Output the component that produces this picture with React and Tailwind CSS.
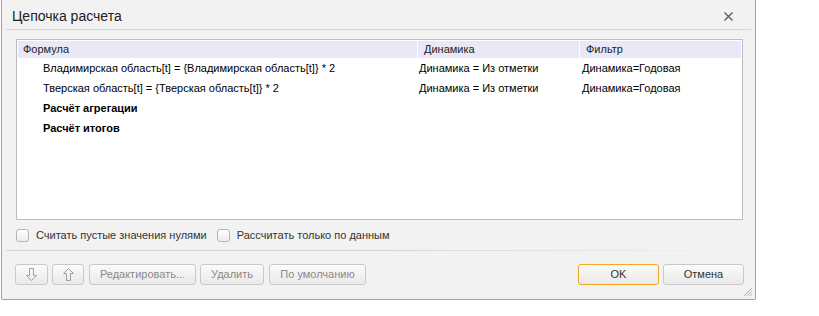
import React from 'react'

const font = { fontFamily: '"Liberation Sans", Arial, sans-serif' }

const rows = [
  { formula: 'Владимирская область[t] = {Владимирская область[t]} * 2', dyn: 'Динамика = Из отметки', filter: 'Динамика=Годовая' },
  { formula: 'Тверская область[t] = {Тверская область[t]} * 2', dyn: 'Динамика = Из отметки', filter: 'Динамика=Годовая' },
  { formula: 'Расчёт агрегации', bold: true },
  { formula: 'Расчёт итогов', bold: true },
]

const Btn = ({ children, w, disabled, primary }) => (
  <button
    type="button"
    className={`${w} h-[21px] flex items-center justify-center rounded-[3px] border bg-gradient-to-b from-[#fbfbfb] to-[#e9e9e9] text-[11px] ${
      primary ? 'border-[#f5a623]' : 'border-[#c9c9c9]'
    } ${disabled ? 'text-[#8a8a8a]' : 'text-[#333]'}`}
  >
    {children}
  </button>
)

const Arrow = ({ up }) => (
  <svg width="11" height="13" viewBox="0 0 11 13" className={up ? 'rotate-180' : ''}>
    <path d="M3.5 0.5 H7.5 V7.5 H10.5 L5.5 12.5 L0.5 7.5 H3.5 Z" fill="none" stroke="#a0a0a0" strokeWidth="1" />
  </svg>
)

const Check = ({ label }) => (
  <label className="flex items-center gap-[7px]">
    <span className="w-[13px] h-[13px] rounded-[3px] border border-[#b5b5b5] bg-gradient-to-b from-white to-[#ececec]" />
    <span className="text-[11px] text-[#333]">{label}</span>
  </label>
)

export default function App() {
  return (
    <div className="w-[819px] h-[316px] bg-white pl-px" style={font}>
      <div className="relative w-[755px] h-[300px] bg-[#f2f2f2] border-x border-b border-[#a3a3a3] rounded-b-[2px] flex flex-col">
        <div className="h-[29px] flex items-center justify-between pl-[10px] pr-[22px] pt-[3px]">
          <span className="text-[14px] text-[#222]">Цепочка расчета</span>
          <svg width="9" height="9" viewBox="0 0 9 9">
            <path d="M0.5 0.5 L8.5 8.5 M8.5 0.5 L0.5 8.5" stroke="#555" strokeWidth="1.2" />
          </svg>
        </div>
        <div className="mx-[4px] h-px bg-[#d6d6d6]" />

        <div className="mt-[9px] ml-[14px] w-[727px] h-[181px] border border-[#bdbdbd] bg-white p-px">
          <div className="flex h-[17px] text-[11px] text-[#222]">
            <div className="w-[399px] bg-[#e8e8f9] pl-[5px] flex items-center">Формула</div>
            <div className="w-px bg-white" />
            <div className="w-[161px] bg-[#e8e8f9] pl-[6px] flex items-center">Динамика</div>
            <div className="w-px bg-white" />
            <div className="w-[161px] bg-[#e8e8f9] pl-[6px] flex items-center">Фильтр</div>
          </div>
          <div>
            {rows.map((r, i) => (
              <div key={i} className="flex h-[20px] items-center text-[11px] text-black">
                <div className={`w-[401px] pl-[25px] ${r.bold ? 'font-bold' : ''}`}>{r.formula}</div>
                <div className="w-[163px]">{r.dyn}</div>
                <div className="flex-1">{r.filter}</div>
              </div>
            ))}
          </div>
        </div>

        <div className="mt-[9px] ml-[14px] h-[13px] flex items-center gap-[10px]">
          <Check label="Считать пустые значения нулями" />
          <Check label="Рассчитать только по данным" />
        </div>

        <div className="mt-[8px] mx-[4px] h-px bg-gradient-to-r from-[#d6d6d6] via-[#d6d6d6] to-[#f2f2f2]" />

        <div className="mt-[13px] ml-[13px] mr-[11px] flex items-center justify-between">
          <div className="flex gap-[4px]">
            <Btn w="w-[33px]" disabled><Arrow /></Btn>
            <Btn w="w-[32px]" disabled><Arrow up /></Btn>
            <Btn w="w-[107px] ml-px" disabled>Редактировать...</Btn>
            <Btn w="w-[64px]" disabled>Удалить</Btn>
            <Btn w="w-[97px] ml-px" disabled>По умолчанию</Btn>
          </div>
          <div className="flex gap-[4px]">
            <Btn w="w-[81px]" primary>OK</Btn>
            <Btn w="w-[81px]">Отмена</Btn>
          </div>
        </div>

        <svg className="absolute right-[2px] bottom-[2px]" width="11" height="11" viewBox="0 0 11 11">
          <path d="M10 2 L2 10 M10 5 L5 10 M10 8 L8 10" stroke="#b0b0b0" strokeWidth="1" />
        </svg>
      </div>
    </div>
  )
}
